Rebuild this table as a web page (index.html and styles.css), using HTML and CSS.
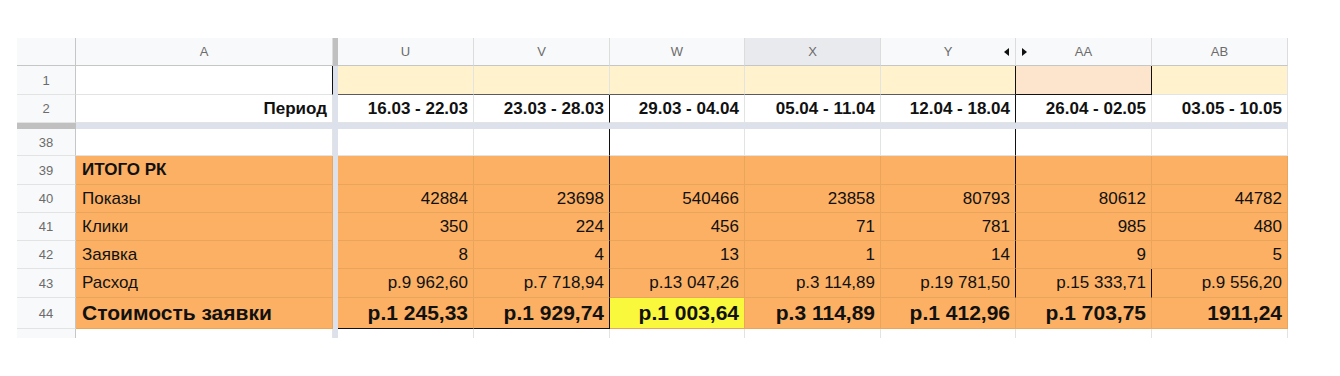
FILE: index.html
```html
<!DOCTYPE html>
<html lang="ru">
<head>
<meta charset="utf-8">
<title>Sheet</title>
<link rel="stylesheet" href="styles.css">
</head>
<body>
<div class="sheet">
  <!-- column headers -->
  <div class="c rh corner"></div>
  <div class="c ch">A</div>
  <div class="fz fzh"></div>
  <div class="c ch">U</div>
  <div class="c ch">V</div>
  <div class="c ch">W</div>
  <div class="c ch sel">X</div>
  <div class="c ch">Y<span class="arr arr-l"></span></div>
  <div class="c ch"><span class="arr arr-r"></span>AA</div>
  <div class="c ch">AB</div>

  <!-- row 1 -->
  <div class="c rh">1</div>
  <div class="c bk-r"></div>
  <div class="fz"></div>
  <div class="c y1 dk-b"></div>
  <div class="c y1 dk-b"></div>
  <div class="c y1 dk-b"></div>
  <div class="c y1 dk-b"></div>
  <div class="c y1 dk-b bk-r"></div>
  <div class="c pe bk-r bk-b"></div>
  <div class="c y1"></div>

  <!-- row 2 -->
  <div class="c rh">2</div>
  <div class="c r b">Период</div>
  <div class="fz"></div>
  <div class="c r b">16.03 - 22.03</div>
  <div class="c r b bk-r">23.03 - 28.03</div>
  <div class="c r b">29.03 - 04.04</div>
  <div class="c r b">05.04 - 11.04</div>
  <div class="c r b bk-r">12.04 - 18.04</div>
  <div class="c r b">26.04 - 02.05</div>
  <div class="c r b">03.05 - 10.05</div>

  <!-- frozen divider -->
  <div class="hd hdh"></div>
  <div class="hd"></div>
  <div class="hd"></div>
  <div class="hd"></div>
  <div class="hd"></div>
  <div class="hd"></div>
  <div class="hd"></div>
  <div class="hd"></div>
  <div class="hd"></div>
  <div class="hd"></div>

  <!-- row 38 -->
  <div class="c rh">38</div>
  <div class="c"></div>
  <div class="fz"></div>
  <div class="c"></div>
  <div class="c bk-r"></div>
  <div class="c"></div>
  <div class="c"></div>
  <div class="c bk-r"></div>
  <div class="c"></div>
  <div class="c"></div>

  <!-- row 39 -->
  <div class="c rh">39</div>
  <div class="c o b">ИТОГО РК</div>
  <div class="fz"></div>
  <div class="c o"></div>
  <div class="c o bk-r"></div>
  <div class="c o"></div>
  <div class="c o"></div>
  <div class="c o bk-r"></div>
  <div class="c o"></div>
  <div class="c o"></div>

  <!-- row 40 -->
  <div class="c rh">40</div>
  <div class="c o">Показы</div>
  <div class="fz"></div>
  <div class="c o r">42884</div>
  <div class="c o r bk-r">23698</div>
  <div class="c o r">540466</div>
  <div class="c o r">23858</div>
  <div class="c o r bk-r">80793</div>
  <div class="c o r">80612</div>
  <div class="c o r">44782</div>

  <!-- row 41 -->
  <div class="c rh">41</div>
  <div class="c o">Клики</div>
  <div class="fz"></div>
  <div class="c o r">350</div>
  <div class="c o r bk-r">224</div>
  <div class="c o r">456</div>
  <div class="c o r">71</div>
  <div class="c o r bk-r">781</div>
  <div class="c o r">985</div>
  <div class="c o r">480</div>

  <!-- row 42 -->
  <div class="c rh">42</div>
  <div class="c o">Заявка</div>
  <div class="fz"></div>
  <div class="c o r">8</div>
  <div class="c o r bk-r">4</div>
  <div class="c o r">13</div>
  <div class="c o r">1</div>
  <div class="c o r bk-r">14</div>
  <div class="c o r">9</div>
  <div class="c o r">5</div>

  <!-- row 43 -->
  <div class="c rh">43</div>
  <div class="c o">Расход</div>
  <div class="fz"></div>
  <div class="c o r">р.9 962,60</div>
  <div class="c o r bk-r">р.7 718,94</div>
  <div class="c o r">р.13 047,26</div>
  <div class="c o r">р.3 114,89</div>
  <div class="c o r bk-r">р.19 781,50</div>
  <div class="c o r bk-r">р.15 333,71</div>
  <div class="c o r">р.9 556,20</div>

  <!-- row 44 -->
  <div class="c rh">44</div>
  <div class="c o big">Стоимость заявки</div>
  <div class="fz"></div>
  <div class="c o r big bk-b">р.1 245,33</div>
  <div class="c o r big bk-b bk-r">р.1 929,74</div>
  <div class="c hl r big">р.1 003,64</div>
  <div class="c o r big">р.3 114,89</div>
  <div class="c o r big">р.1 412,96</div>
  <div class="c o r big">р.1 703,75</div>
  <div class="c o r big">1911,24</div>

  <!-- row 45 -->
  <div class="c rh">45</div>
  <div class="c"></div>
  <div class="fz"></div>
  <div class="c"></div>
  <div class="c"></div>
  <div class="c"></div>
  <div class="c"></div>
  <div class="c"></div>
  <div class="c"></div>
  <div class="c"></div>
</div>
</body>
</html>
```

FILE: styles.css
```css
html, body {
  margin: 0;
  padding: 0;
  background: #ffffff;
}

body {
  font-family: "Liberation Sans", Arial, sans-serif;
  color: #111111;
}

.sheet {
  margin: 38px 0 0 17px;
  width: 1271px;
  height: 300px;
  overflow: hidden;
  display: grid;
  grid-template-columns: 59px 257px 5px 136px 136px 135px 136px 135px 136px 136px;
  grid-template-rows: 28px 29px 28px 6px 27px 29px 28px 28px 28px 29px 31px 28px;
}

.c {
  box-sizing: border-box;
  display: flex;
  align-items: center;
  padding: 0 5px 0 6px;
  border-right: 1px solid #e2e3e3;
  border-bottom: 1px solid #e2e3e3;
  font-size: 17px;
  white-space: nowrap;
  overflow: hidden;
  background: #ffffff;
}

.rh {
  background: #f8f9fa;
  justify-content: center;
  padding: 0;
  font-size: 13px;
  color: #6b6b6b;
  border-right-color: #c4c7c5;
  border-bottom-color: #e2e3e3;
}

.corner {
  border-bottom-color: #c4c7c5;
}

.ch {
  position: relative;
  background: #f8f9fa;
  justify-content: center;
  padding: 0;
  font-size: 13px;
  color: #6b6b6b;
  border-bottom-color: #c4c7c5;
  border-right-color: #dcdcdc;
}

.ch.sel {
  background: #e8eaed;
}

.arr {
  position: absolute;
  top: 10px;
  width: 0;
  height: 0;
  border-top: 4px solid transparent;
  border-bottom: 4px solid transparent;
}

.arr-l {
  right: 6px;
  border-right: 5px solid #111111;
}

.arr-r {
  left: 6px;
  border-left: 5px solid #111111;
}

.fz {
  background: #dce1eb;
}

.fz.fzh {
  background: #c0c0c0;
}

.hd {
  background: #dce1eb;
}

.hd.hdh {
  background: #c0c0c0;
}

.r {
  justify-content: flex-end;
}

.b {
  font-weight: bold;
}

.big {
  font-weight: bold;
  font-size: 21px;
}

.y1 {
  background: #fff2cc;
}

.pe {
  background: #fde4cd;
}

.o {
  background: #fbb064;
  border-right-color: #eaa55d;
  border-bottom-color: #eaa55d;
}

.hl {
  background: #f9f83c;
  border-right-color: #eaa55d;
  border-bottom-color: #eaa55d;
}

.dk-b {
  border-bottom-color: #5a5a5a;
}

.c.bk-r {
  border-right-color: #111111;
}

.c.bk-b {
  border-bottom-color: #111111;
}
```
